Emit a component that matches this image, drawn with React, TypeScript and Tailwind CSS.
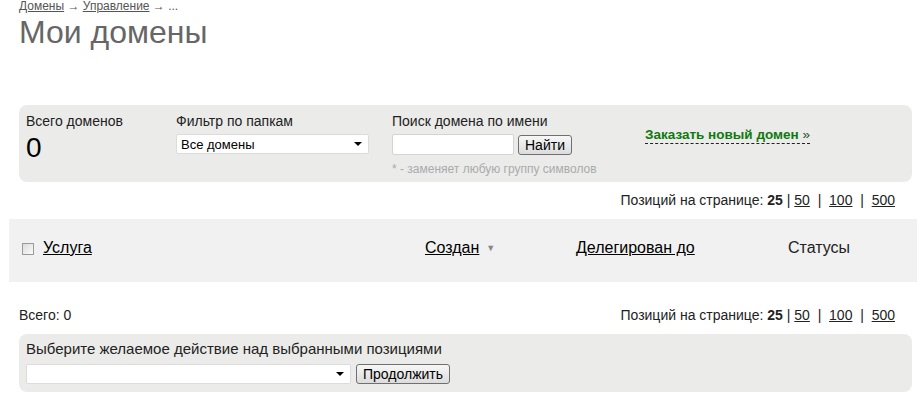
import React from 'react';

function FakeSelect({ label, width }: { label?: string; width: string }) {
  return (
    <div className={`${width} h-[20px] bg-white border border-[#dcdcdc] rounded-[2px] flex items-center justify-between pl-[4px] pr-[6px]`}>
      <span className="text-[13px] leading-[15px] text-black">{label}</span>
      <span className="w-0 h-0 border-l-[4px] border-r-[4px] border-t-[4px] border-l-transparent border-r-transparent border-t-black" />
    </div>
  );
}

function Btn({ children }: { children: React.ReactNode }) {
  return (
    <button className="h-[20px] px-[6px] border border-[#707070] rounded-[3px] bg-gradient-to-b from-[#f7f7f7] to-[#dcdcdc] text-[14px] leading-[16px] text-black">
      {children}
    </button>
  );
}

function PerPage() {
  return (
    <div className="text-[14px] leading-[16px] text-[#222] whitespace-pre">
      Позиций на странице: <b>25</b> | <a className="underline">50</a>  |  <a className="underline">100</a>  |  <a className="underline">500</a>
    </div>
  );
}

export default function App() {
  return (
    <div className="w-[917px] h-[404px] overflow-hidden bg-white font-['Liberation_Sans',Arial,sans-serif] text-[14px] text-[#222]">
      <div className="pl-[19px] pr-[5px]">
        {/* breadcrumbs */}
        <div className="text-[12px] leading-[12px] text-[#555]">
          <a className="underline">Домены</a> → <a className="underline">Управление</a> → ...
        </div>
        <h1 className="mt-[4px] text-[32px] leading-[32px] text-[#666]">Мои домены</h1>

        {/* filter panel */}
        <div className="mt-[57px] h-[77px] rounded-[8px] bg-[#ebecea] pl-[7px] pt-[8px] flex">
          <div className="w-[150px]">
            <div className="leading-[16px]">Всего доменов</div>
            <div className="mt-[5px] text-[28px] leading-[28px] text-black">0</div>
          </div>
          <div className="w-[216px]">
            <div className="leading-[16px]">Фильтр по папкам</div>
            <div className="mt-[5px]">
              <FakeSelect label="Все домены" width="w-[193px]" />
            </div>
          </div>
          <div className="w-[253px]">
            <div className="leading-[16px]">Поиск домена по имени</div>
            <div className="mt-[5px] flex items-center gap-[4px]">
              <div className="w-[122px] h-[21px] bg-white border border-[#d4d4d4] rounded-[2px]" />
              <Btn>Найти</Btn>
            </div>
            <div className="mt-[7px] text-[12px] leading-[14px] text-[#aaa]">* - заменяет любую группу символов</div>
          </div>
          <div className="pt-[11px]">
            <a className="inline-block text-[13.5px] leading-[16px] border-b border-dashed border-[#222] font-bold text-[#0e7a0e]">
              Заказать новый домен <span className="font-normal text-[#1f4f1f]">»</span>
            </a>
          </div>
        </div>

        <div className="mt-[10px] pr-[17px] flex justify-end">
          <PerPage />
        </div>
      </div>

      {/* table header */}
      <div className="ml-[9px] mt-[11px] h-[63px] bg-[#f0f1f0] pl-[13px] pt-[21px] grid grid-cols-[403px_151px_212px_1fr] items-start text-[16px] leading-[16px] text-[#222]">
        <div className="flex items-center gap-[9px]">
          <span className="relative top-[1px] w-[12px] h-[12px] border border-[#9a9a9a] bg-gradient-to-br from-[#dcdcdc] to-[#fbfbfb]" />
          <a className="underline text-black">Услуга</a>
        </div>
        <div className="flex items-center gap-[7px]">
          <a className="underline text-black">Создан</a>
          <span className="text-[9px] leading-[16px] text-[#888]">▼</span>
        </div>
        <div>
          <a className="underline text-black">Делегирован до</a>
        </div>
        <div>Статусы</div>
      </div>

      <div className="pl-[19px] pr-[5px]">
        <div className="mt-[25px] pr-[17px] flex justify-between">
          <div className="leading-[16px]">Всего: 0</div>
          <PerPage />
        </div>

        {/* action panel */}
        <div className="mt-[11px] h-[58px] rounded-[8px] bg-[#ebecea] pl-[7px] pt-[6px]">
          <div className="text-[15px] leading-[17px]">Выберите желаемое действие над выбранными позициями</div>
          <div className="mt-[7px] flex items-center gap-[5px]">
            <FakeSelect width="w-[325px]" />
            <Btn>Продолжить</Btn>
          </div>
        </div>
      </div>
    </div>
  );
}
